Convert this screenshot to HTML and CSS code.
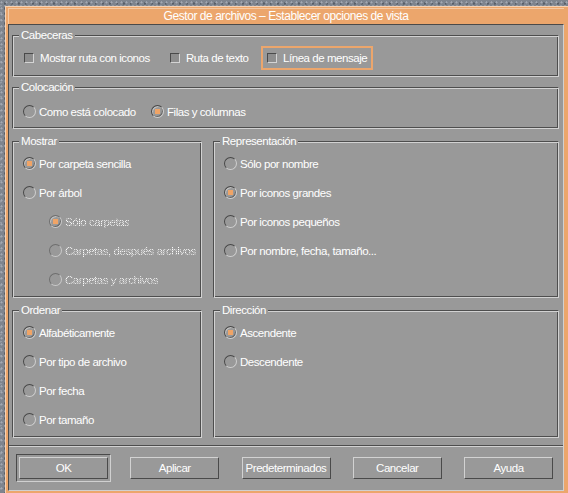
FILE: index.html
```html
<!DOCTYPE html>
<html lang="es">
<head>
<meta charset="utf-8">
<title>Gestor de archivos – Establecer opciones de vista</title>
<link rel="stylesheet" href="styles.css">
</head>
<body>
<div class="window">
  <div class="titlebar">Gestor de archivos – Establecer opciones de vista</div>
  <div class="client">
    <div class="group g-cab">
      <div class="gtitle">Cabeceras</div>
      <div class="hrow">
        <div class="check w-cb1"><span class="cb"></span><span>Mostrar ruta con iconos</span></div>
        <div class="check w-cb2"><span class="cb"></span><span>Ruta de texto</span></div>
        <div class="check focus"><span class="cb"></span><span>Línea de mensaje</span></div>
      </div>
    </div>

    <div class="group g-col">
      <div class="gtitle">Colocación</div>
      <div class="rows">
        <div class="row">
          <div class="opt w-col1"><span class="radio"></span><span>Como está colocado</span></div>
          <div class="opt"><span class="radio on"></span><span>Filas y columnas</span></div>
        </div>
      </div>
    </div>

    <div class="pair g-mid">
      <div class="group">
        <div class="gtitle">Mostrar</div>
        <div class="rows">
          <div class="row"><div class="opt"><span class="radio on"></span><span>Por carpeta sencilla</span></div></div>
          <div class="row"><div class="opt"><span class="radio"></span><span>Por árbol</span></div></div>
          <div class="row sub disabled"><div class="opt"><span class="radio on"></span><span class="txt">Sólo carpetas</span></div></div>
          <div class="row sub disabled"><div class="opt"><span class="radio"></span><span class="txt">Carpetas, después archivos</span></div></div>
          <div class="row sub disabled"><div class="opt"><span class="radio"></span><span class="txt">Carpetas y archivos</span></div></div>
        </div>
      </div>
      <div class="group">
        <div class="gtitle">Representación</div>
        <div class="rows">
          <div class="row"><div class="opt"><span class="radio"></span><span>Sólo por nombre</span></div></div>
          <div class="row"><div class="opt"><span class="radio on"></span><span>Por iconos grandes</span></div></div>
          <div class="row"><div class="opt"><span class="radio"></span><span>Por iconos pequeños</span></div></div>
          <div class="row"><div class="opt"><span class="radio"></span><span>Por nombre, fecha, tamaño...</span></div></div>
        </div>
      </div>
    </div>

    <div class="pair g-low">
      <div class="group">
        <div class="gtitle">Ordenar</div>
        <div class="rows">
          <div class="row"><div class="opt"><span class="radio on"></span><span>Alfabéticamente</span></div></div>
          <div class="row"><div class="opt"><span class="radio"></span><span>Por tipo de archivo</span></div></div>
          <div class="row"><div class="opt"><span class="radio"></span><span>Por fecha</span></div></div>
          <div class="row"><div class="opt"><span class="radio"></span><span>Por tamaño</span></div></div>
        </div>
      </div>
      <div class="group">
        <div class="gtitle">Dirección</div>
        <div class="rows">
          <div class="row"><div class="opt"><span class="radio on"></span><span>Ascendente</span></div></div>
          <div class="row"><div class="opt"><span class="radio"></span><span>Descendente</span></div></div>
        </div>
      </div>
    </div>

    <div class="separator"></div>

    <div class="buttons">
      <div class="defframe"><button class="btn">OK</button></div>
      <button class="btn">Aplicar</button>
      <button class="btn">Predeterminados</button>
      <button class="btn">Cancelar</button>
      <button class="btn">Ayuda</button>
    </div>
  </div>
</div>
</body>
</html>
```
FILE: styles.css
```css
html, body {
  margin: 0;
}
body {
  box-sizing: border-box;
  width: 568px;
  height: 493px;
  overflow: hidden;
  padding: 6px 0 0 5px;
  background-color: #7e848e;
  background-image:
    radial-gradient(circle at 30% 40%, #a3a9b3 0 0.8px, transparent 1.3px),
    radial-gradient(circle at 70% 70%, #575d67 0 0.9px, transparent 1.4px),
    radial-gradient(circle at 20% 80%, #959ba5 0 0.7px, transparent 1.2px);
  background-size: 5px 6px, 7px 5px, 4px 7px;
  font-family: "Liberation Sans", Arial, Helvetica, sans-serif;
  font-size: 11.5px;
  letter-spacing: -0.45px;
  color: #fff;
}

.window {
  box-sizing: border-box;
  width: 563px;
  height: 487px;
  padding: 2px 4px 2px 3px;
  background: #eca66c;
  box-shadow: inset 1px 1px 0 #f8d2b2;
  display: flex;
  flex-direction: column;
}

.titlebar {
  box-sizing: border-box;
  height: 16px;
  line-height: 16px;
  text-align: center;
  color: #fff;
  font-size: 12px;
  white-space: nowrap;
  box-shadow: inset 1px 1px 0 #f6c9a2;
}

.client {
  flex: 1;
  box-sizing: border-box;
  background: #999999;
  border: 1px solid;
  border-color: #4a4a4a #d0d0d0 #d0d0d0 #4a4a4a;
  padding-top: 10px;
  display: flex;
  flex-direction: column;
}

.group {
  box-sizing: border-box;
  border: 1px solid;
  border-color: #4e4e4e #d2d2d2 #d2d2d2 #4e4e4e;
  box-shadow: inset 1px 1px 0 #d2d2d2, inset -1px -1px 0 #4e4e4e;
  padding-left: 10px;
}

.g-cab, .g-col {
  margin: 0 4px 0 3px;
  height: 42px;
}
.g-col {
  margin-top: 10px;
}

.pair {
  margin: 12px 4px 0 3px;
  display: grid;
  grid-template-columns: 190px 1fr;
  column-gap: 11px;
}
.g-mid {
  height: 157px;
}
.g-low {
  height: 128px;
}

.gtitle {
  width: fit-content;
  height: 13px;
  line-height: 13px;
  margin: -7px 0 0 -4px;
  padding: 0 2px;
  background: #999999;
  white-space: nowrap;
}

.rows {
  padding-top: 1px;
}
.g-col .rows {
  padding-top: 3px;
}

.row {
  height: 29px;
  display: flex;
  align-items: center;
}
.row.sub {
  padding-left: 26px;
}

.hrow {
  margin-top: 4px;
  height: 24px;
  display: flex;
  align-items: center;
}

.opt, .check {
  display: flex;
  align-items: center;
  white-space: nowrap;
}
.w-col1 {
  width: 128px;
}
.w-cb1 {
  width: 146px;
  margin-left: 1px;
}
.w-cb2 {
  width: 91px;
}

.focus {
  box-sizing: border-box;
  height: 24px;
  border: 2px solid #eca66c;
  padding: 0 4px 0 4px;
}

.cb {
  flex: none;
  box-sizing: border-box;
  width: 10px;
  height: 10px;
  margin-right: 6px;
  border: 1px solid;
  border-color: #4a4a4a #d4d4d4 #d4d4d4 #4a4a4a;
  background: #8d8d8d;
}

.radio {
  flex: none;
  box-sizing: border-box;
  width: 13px;
  height: 13px;
  margin-right: 3px;
  border-radius: 50%;
  border: 1px solid;
  border-color: #474747 #cfcfcf #cfcfcf #474747;
  display: flex;
  align-items: center;
  justify-content: center;
}
.radio.on {
  box-shadow: inset 1px 1px 0 #c2c2c2, inset -1px -1px 0 #6a6a6a;
}
.radio.on::after {
  content: "";
  width: 5px;
  height: 5px;
  background: #f0a466;
}
.disabled .radio {
  border-color: #6e6e6e #c9c9c9 #c9c9c9 #6e6e6e;
}
.disabled .txt {
  color: transparent;
  background-image: repeating-conic-gradient(#ffffff 0 25%, rgba(255, 255, 255, 0.25) 0 50%);
  background-size: 2px 2px;
  -webkit-background-clip: text;
  background-clip: text;
}

.separator {
  margin-top: 7px;
  height: 0;
  border-top: 1px solid #4e4e4e;
  border-bottom: 1px solid #d2d2d2;
}

.buttons {
  margin-top: 7px;
  height: 28px;
  padding: 0 10px;
  display: flex;
  align-items: center;
  gap: 22.25px;
}

.defframe {
  display: flex;
  margin: 0 -3px;
  padding: 2px;
  border: 1px solid;
  border-color: #4a4a4a #d0d0d0 #d0d0d0 #4a4a4a;
}

.btn {
  box-sizing: border-box;
  width: 89px;
  height: 22px;
  padding: 0;
  margin: 0;
  background: #999999;
  border: 1px solid;
  border-color: #d2d2d2 #4a4a4a #4a4a4a #d2d2d2;
  color: #fff;
  font: inherit;
  letter-spacing: inherit;
  text-align: center;
}
```
